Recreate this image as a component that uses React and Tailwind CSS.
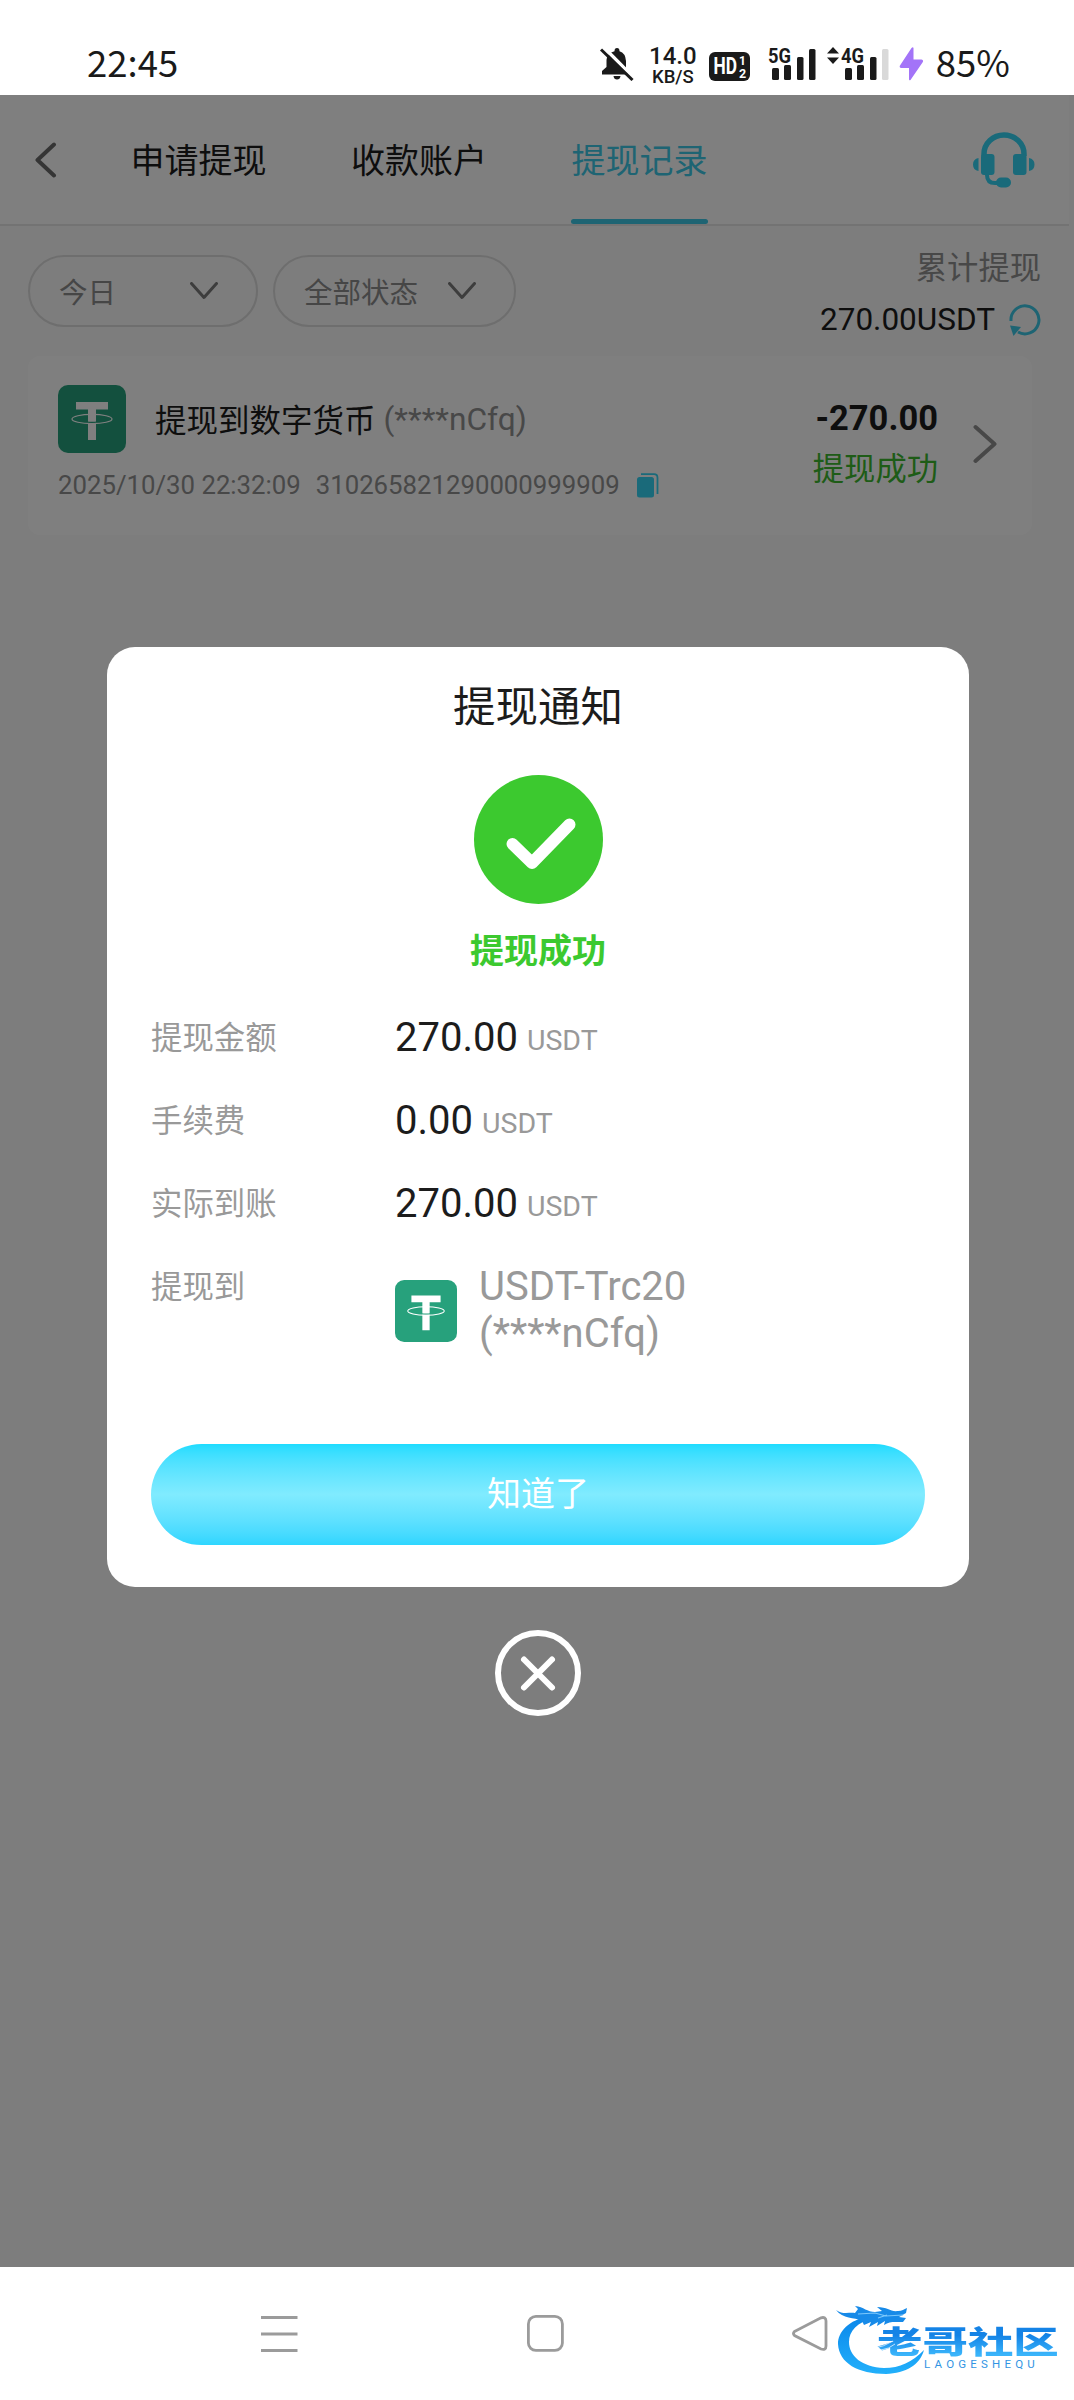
import React, { useState } from "react"
import clsx from "clsx"

const tabs = ["申请提现", "收款账户", "提现记录"]

const details = [
  { label: "提现金额", value: "270.00" },
  { label: "手续费", value: "0.00" },
  { label: "实际到账", value: "270.00" },
]

function BellOffIcon() {
  return (
    <svg className="h-[34px] w-[34px]" viewBox="0 0 34 34">
      <path d="M14.5 4.2Q14.5 1 17 1t2.500 3.200Q25.500 6 26 14v8l5 5v0.500H2V24l4.500-4V13Q7 6 14.500 4.200z" fill="#1a1a1a" />
      <path d="M13.500 29h7q-.5 3.500-3.500 3.500t-3.500-3.500z" fill="#1a1a1a" />
      <path d="M3.500 0L35 32" stroke="#fff" strokeWidth="3.500" />
      <path d="M1 2.500L32.500 33" stroke="#1a1a1a" strokeWidth="3" />
    </svg>
  )
}

function SignalBars({ label, weak }) {
  return (
    <svg className="h-[34px] w-[50px] overflow-visible" viewBox="0 0 50 34">
      <text x="0" y="15.500" fontSize="21" fontWeight="700" textLength="23" lengthAdjust="spacingAndGlyphs" fill="#1a1a1a">{label}</text>
      <rect x="4" y="21" width="7" height="12" rx="1.500" fill="#1a1a1a" />
      <rect x="16" y="18" width="7" height="15" rx="1.500" fill="#1a1a1a" />
      <rect x="29" y="10" width="6.500" height="23" rx="1.500" fill="#1a1a1a" />
      <rect x="41" y="2" width="6.500" height="31" rx="1.500" fill={weak ? "#d9d9d9" : "#1a1a1a"} />
    </svg>
  )
}

function StatusBar() {
  return (
    <div className="flex h-[95px] items-start bg-white pl-[87px] pr-[64px] text-[#1a1a1a]">
      <span className="mt-[40px] text-[36.500px] leading-[44px] [font-family:'Noto_Sans_CJK_SC',sans-serif]">22:45</span>
      <div className="ml-auto mt-[47px] flex items-start">
        <BellOffIcon />
        <div className="ml-[15px] flex w-[48px] flex-col items-center font-medium">
          <span className="text-[24px] leading-[19px]">14.0</span>
          <span className="mt-[2px] text-[18.500px] leading-[18px]">KB/S</span>
        </div>
        <svg className="ml-[12px] mt-[5px] h-[29px] w-[42px]" viewBox="0 0 42 29">
          <rect width="41" height="29" rx="6" fill="#1a1a1a" />
          <text x="4.500" y="22" fontSize="23" fontWeight="700" textLength="23.500" lengthAdjust="spacingAndGlyphs" fill="#fff">HD</text>
          <text x="30" y="13" fontSize="12" fontWeight="700" fill="#fff">1</text>
          <text x="30" y="25.500" fontSize="12.500" fontWeight="700" fill="#fff">2</text>
        </svg>
        <div className="ml-[17px]">
          <SignalBars label="5G" />
        </div>
        <svg className="ml-[9px] h-[17px] w-[12px]" viewBox="0 0 12 17">
          <path d="M6 0l6 6.500H0zM6 17l6-6.500H0z" fill="#1a1a1a" />
        </svg>
        <div className="ml-[2px]">
          <SignalBars label="4G" weak />
        </div>
        <svg className="ml-[8px] h-[34px] w-[25px]" viewBox="0 0 25 34">
          <path d="M14.500 1V12.500H22.500Q25 13 23.500 15.500L11.500 33Q10 34 10 32V21H2Q0 20.500 1 18.500L12.500 1Q14 -.5 14.500 1z" fill="#a374f8" />
        </svg>
      </div>
      <span className="ml-[12px] mt-[40px] text-[36.500px] leading-[44px] [font-family:'Noto_Sans_CJK_SC',sans-serif]">85%</span>
    </div>
  )
}

function HeadsetIcon() {
  return (
    <svg className="h-[56px] w-[62px]" viewBox="0 0 62 56">
      <path d="M11 24V22a20 19 0 0 1 40 0v2" fill="none" stroke="#34d4f4" strokeWidth="5.500" />
      <rect x="8" y="22" width="13.500" height="21" rx="3" fill="#34d4f4" />
      <rect x="40" y="22" width="13.500" height="21" rx="3" fill="#34d4f4" />
      <path d="M5.500 26v13Q0 38 0 32.500T5.500 26zM56 26v13q5.500-1 5.500-6.500T56 26z" fill="#34d4f4" />
      <path d="M14 43q0 8 8 8h6" fill="none" stroke="#34d4f4" strokeWidth="4" />
      <rect x="23" y="45.500" width="15" height="10" rx="5" fill="#34d4f4" />
    </svg>
  )
}

function TetherIcon({ className }) {
  return (
    <svg className={className} viewBox="0 0 68 68">
      <rect width="68" height="68" rx="10" fill="#27a17c" />
      <path d="M18 17h32v7.500H38V55h-8V24.500H18z" fill="#fff" />
      <path d="M29 37.200q5 .5 10 0" fill="none" stroke="#27a17c" strokeWidth="1.200" />
      <ellipse cx="34" cy="34" rx="20" ry="4.600" fill="none" stroke="#fff" strokeWidth="1.200" />
    </svg>
  )
}

function FilterPill({ children, className }) {
  return (
    <button className={clsx("flex h-[72px] items-center justify-between rounded-full border-2 border-[#dcdcdc] pl-[29px] text-[28.500px] text-[#8c8c8c]", className)}>
      <span className="pt-[6px]">{children}</span>
      <svg className="h-[18px] w-[28px]" viewBox="0 0 28 18" fill="none" stroke="#7a7a7a" strokeWidth="3" strokeLinecap="round" strokeLinejoin="round">
        <path d="M1.500 1.500L14 15.500L26.500 1.500" />
      </svg>
    </button>
  )
}

function RecordsPage() {
  const [activeTab, setActiveTab] = useState(2)

  return (
    <div className="h-full bg-[#fafafa]">
      <header className="flex h-[131px] w-[1069px] items-start border-b-2 border-[#e6e6e6] bg-white pl-[35px]">
        <svg className="mt-[47px] h-[36px] w-[22px]" viewBox="0 0 22 36" fill="none" stroke="#6b6b6b" strokeWidth="4" strokeLinecap="round" strokeLinejoin="round">
          <path d="M19 2.500L2.500 18L19 33.500" />
        </svg>
        <nav className="ml-[73px] flex gap-[83.500px]">
          {tabs.map((tab, index) => (
            <button
              key={tab}
              onClick={() => setActiveTab(index)}
              className={clsx("flex h-[129px] w-[137px] flex-col items-center justify-between text-[34px]", index === activeTab ? "text-[#3cc9e6]" : "text-[#1c1c1c]")}
            >
              <span className="mt-[41px] leading-[50px]">{tab}</span>
              {index === activeTab && <span className="h-[5px] w-full rounded-full bg-[#3cc9e6]" />}
            </button>
          ))}
        </nav>
        <div className="ml-auto mr-[34px] mt-[37px]">
          <HeadsetIcon />
        </div>
      </header>

      <div className="flex h-[130px] items-start pl-[28px] pr-[33px]">
        <div className="mt-[29px] flex gap-[15px]">
          <FilterPill className="w-[230px] pr-[38px]">今日</FilterPill>
          <FilterPill className="w-[243px] pr-[38px]">全部状态</FilterPill>
        </div>
        <div className="ml-auto mt-[18px] flex flex-col items-end">
          <span className="text-[31.300px] leading-[50px] text-[#919191]">累计提现</span>
          <div className="-mt-px flex items-center text-[31.500px] leading-[54px] text-[#1c1c1c]">
            270.00USDT
            <svg className="ml-[14px] h-[32px] w-[32px]" viewBox="0 0 32 32">
              <path d="M2 17A14 14 0 1 1 9 28" fill="none" stroke="#3cc9e6" strokeWidth="3" />
              <path d="M1 21.500l11 1.500-7.500 9z" fill="#3cc9e6" />
            </svg>
          </div>
        </div>
      </div>

      <div className="ml-[28px] flex h-[179px] w-[1004px] items-start rounded-xl bg-white pl-[30px] pr-[35px]">
        <div>
          <div className="mt-[29px] flex h-[68px] items-center text-[31.700px] text-[#1c1c1c]">
            <TetherIcon className="h-[68px] w-[68px]" />
            <span className="ml-[29px] pt-[5px] text-[31.500px]">提现到数字货币</span>
            <span className="ml-[8px] pt-[2px] text-[#919191]">(****nCfq)</span>
          </div>
          <div className="mt-[13px] flex items-center text-[25.750px] leading-[38px] text-[#919191]">
            <span>2025/10/30 22:32:09</span>
            <span className="ml-[15px]">310265821290000999909</span>
            <svg className="ml-[17px] h-[25px] w-[22px]" viewBox="0 0 22 25">
              <rect x="0" y="4" width="17" height="20.500" rx="2.500" fill="#34d4f4" />
              <path d="M4 1.200h13q3.500 0 3.500 3.500V21" fill="none" stroke="#34d4f4" strokeWidth="1.800" />
            </svg>
          </div>
        </div>
        <div className="ml-auto mt-[37px] flex flex-col items-end">
          <span className="text-[34.500px] font-bold leading-[50px] text-[#1c1c1c]">-270.00</span>
          <span className="mt-[2px] text-[31.300px] leading-[50px] text-[#3cb82f]">提现成功</span>
        </div>
        <svg className="ml-[35px] mt-[68px] h-[40px] w-[24px]" viewBox="0 0 24 40" fill="none" stroke="#919191" strokeWidth="4" strokeLinecap="round" strokeLinejoin="round">
          <path d="M2.500 3L21.500 20L2.500 37" />
        </svg>
      </div>
    </div>
  )
}

function NoticeDialog({ onClose }) {
  return (
    <div className="absolute inset-0 flex flex-col items-center bg-black/50 pl-[2px] pt-[552px]">
      <div className="flex h-[940px] w-[862px] flex-col rounded-[28px] bg-white px-[44px]">
        <h2 className="mt-[29px] text-center text-[42.500px] leading-[64px] text-[#1c1c1c]">提现通知</h2>
        <svg className="mx-auto mt-[35px] h-[129px] w-[129px]" viewBox="0 0 129 129">
          <circle cx="64.500" cy="64.500" r="64.500" fill="#3cc92f" />
          <path d="M38.500 69L58 88L95.500 49.500" fill="none" stroke="#fff" strokeWidth="12" strokeLinecap="round" strokeLinejoin="round" />
        </svg>
        <p className="mt-[22px] text-center text-[34px] font-bold leading-[50px] text-[#3cc92f]">提现成功</p>

        <div className="mt-[20px] text-[31.400px] text-[#999]">
          {details.map((item) => (
            <div key={item.label} className="flex h-[83px] items-center">
              <span className="w-[244px] pt-[3px]">{item.label}</span>
              <span className="text-[40px] text-[#1c1c1c]">{item.value}</span>
              <span className="ml-[9px] pt-[7px] text-[28.500px]">USDT</span>
            </div>
          ))}
          <div className="flex items-start">
            <span className="mt-[18px] w-[244px] leading-[50px]">提现到</span>
            <TetherIcon className="mt-[35px] h-[62px] w-[62px]" />
            <span className="ml-[22px] mt-[18px] w-[212px] text-[40px] leading-[47px]">USDT-Trc20 (****nCfq)</span>
          </div>
        </div>

        <button
          onClick={onClose}
          className="mb-[42px] mt-auto h-[101px] w-full rounded-full bg-linear-to-b from-[#1cdcff] via-[#80ebff] to-[#2ed6ff] text-[34px] text-white"
        >
          知道了
        </button>
      </div>
      <button onClick={onClose} className="mt-[43px]" aria-label="关闭">
        <svg className="h-[86px] w-[86px]" viewBox="0 0 86 86" fill="none" stroke="#fff" strokeLinecap="round">
          <circle cx="43" cy="43" r="40" strokeWidth="6" />
          <path d="M29 29.500L57 57.500M57 29.500L29 57.500" strokeWidth="6" />
        </svg>
      </button>
    </div>
  )
}

function CommunityLogo() {
  return (
    <div className="absolute bottom-[17px] right-[14px] h-[80px] w-[224px]">
      <svg className="absolute inset-0 h-full w-full" viewBox="0 0 224 80">
        <defs>
          <linearGradient id="dragon" x1="0" y1="0" x2="0" y2="1">
            <stop offset="0" stopColor="#0a86ea" />
            <stop offset="1" stopColor="#22b0fb" />
          </linearGradient>
        </defs>
        <path d="M34 13C12 17 2 29 2 41C3 60 22 71 50 71C70 70 84 62 88 47C76 59 64 65 48 65C26 64 13 53 13 39C13 28 21 19 38 15z" fill="url(#dragon)" />
        <path d="M0 7c7 5 13 2 19 3l3-4-3-3c9 1 12 6 20 6l7-1-5-4c11 0 13 5 21 4 4 0 6-2 9-3l-1 5-7 4 7 1-3 4c-9 0-13-1-19 3l1-4-8 5 1-4-9 5 2-5-7 3-2-4C18 14 7 16 0 7z" fill="#178ae8" />
        <path d="M22 11l17-1 11 3 17-1M42 15l9-3" fill="none" stroke="#7cc8fb" strokeWidth="1.200" />
      </svg>
      <span className="absolute left-[41px] top-[20px] origin-left scale-x-[1.420] scale-y-95 whitespace-nowrap bg-linear-to-b from-[#1483e6] from-30% to-[#3ab4fa] to-80% bg-clip-text text-[32px] font-black leading-[40px] text-transparent">老哥社区</span>
      <svg className="absolute left-[35px] top-[32px] h-[18px] w-[50px]" viewBox="0 0 50 18" fill="none" stroke="#fff" strokeOpacity=".7">
        <path d="M4 13q8-1 18-7M10 15q8-1 14-6" />
      </svg>
      <span className="absolute left-[88px] top-[55px] whitespace-nowrap text-[11.500px] leading-[12px] tracking-[4.200px] text-[#3295e3]">LAOGESHEQU</span>
    </div>
  )
}

function NavBar() {
  return (
    <div className="relative flex h-[133px] items-start bg-white pl-[261px] pt-[48px]">
      <svg className="h-[38px] w-[37px]" viewBox="0 0 37 38" stroke="#9b9b9b" strokeWidth="3">
        <path d="M0 2.500h36.500M0 19h36.500M0 35.500h36.500" />
      </svg>
      <svg className="ml-[229px] h-[37px] w-[37px]" viewBox="0 0 37 37" fill="none" stroke="#9b9b9b" strokeWidth="2.800">
        <rect x="1.400" y="1.400" width="34" height="34" rx="7.500" />
      </svg>
      <svg className="ml-[228px] mt-px h-[36px] w-[36px]" viewBox="0 0 36 36" fill="none" stroke="#9b9b9b" strokeWidth="2.800">
        <path d="M2.500 15.500L29 1.800Q34 .5 34 5V30Q34 34.500 29 33L2.500 19.500Q.5 17.500 2.500 15.500z" />
      </svg>
      <CommunityLogo />
    </div>
  )
}

export default function App() {
  const [showNotice, setShowNotice] = useState(true)

  return (
    <div className="flex h-[2400px] w-[1074px] flex-col overflow-hidden [font-family:Roboto,'Noto_Sans_CJK_SC',sans-serif]">
      <StatusBar />
      <main className="relative h-[2172px]">
        <RecordsPage />
        {showNotice && <NoticeDialog onClose={() => setShowNotice(false)} />}
      </main>
      <NavBar />
    </div>
  )
}
